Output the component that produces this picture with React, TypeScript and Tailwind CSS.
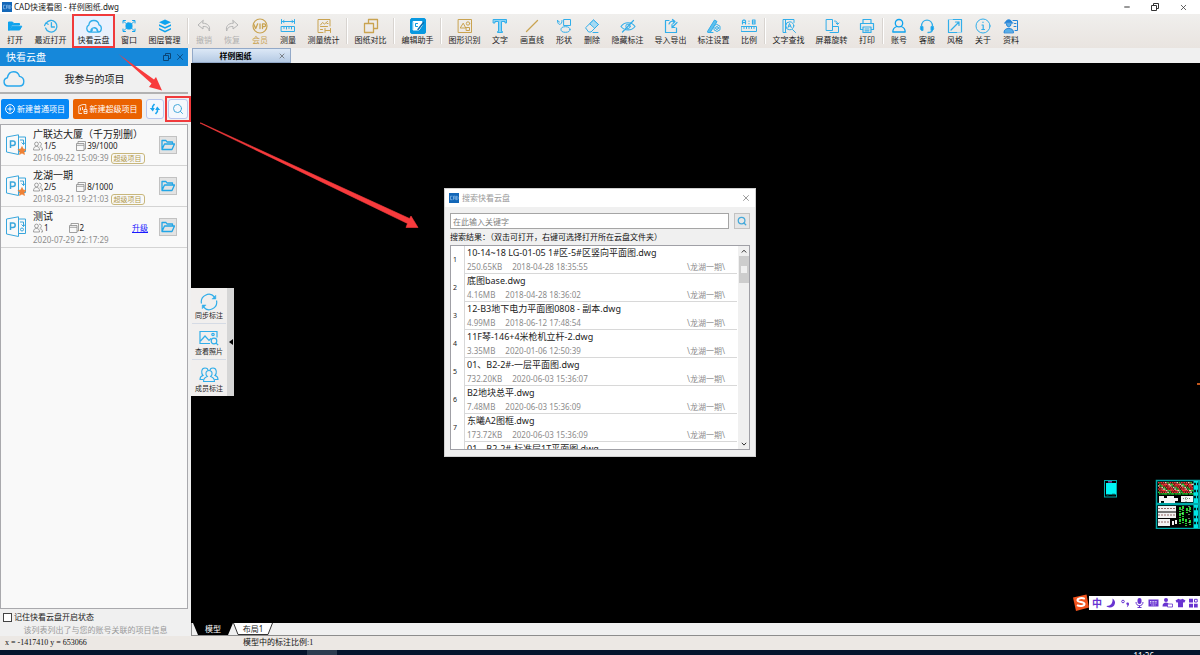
import { useState, type ReactNode } from "react";
import { clsx } from "clsx";
import { Minus, Search, X } from "lucide-react";

const CYAN = "#31aeea";
const SKY = "#0fa3ee";
const GOLD = "#c9a350";
const GREY = "#b4b4b4";

function Icon({ color = CYAN, children }: { color?: string; children: ReactNode }) {
  return (
    <svg
      viewBox="0 0 16 16"
      className="h-4 w-4"
      fill="none"
      stroke={color}
      strokeWidth="1"
      strokeLinecap="round"
      strokeLinejoin="round"
      aria-hidden="true"
    >
      {children}
    </svg>
  );
}

const icons: Record<string, ReactNode> = {
  open: (
    <Icon color={SKY}>
      <path d="M1.5 12V4h4l1.3 1.5h5.7V7H4.5L2.5 12z" fill={SKY} />
      <path d="M4.8 8.2h10L12.6 12H2.8z" fill={SKY} />
    </Icon>
  ),
  recent: (
    <Icon>
      <path d="M3.2 5.2A5.8 5.8 0 1 1 2.6 10M1.6 7.6l1.2-2.6 2.4 1.3M8.4 4.6V9h3" strokeWidth="1.3" />
    </Icon>
  ),
  cloud: (
    <Icon>
      <path
        d="M4 14A3.6 3.6 0 0 1 2.8 7.200C3.500 1 12 1 13 6.800 16.500 8 15.800 14 12.500 14M5 14.200c-1-5 5.500-6.200 6.800-1.200M6.400 11.800L4.800 14.200h7.400l-1.400-2.200"
        strokeWidth="1.3"
      />
    </Icon>
  ),
  window: (
    <Icon color={SKY}>
      <path d="M2 5V2.500h2.500M11.500 2.500H14V5M14 11v2.500h-2.500M4.500 13.500H2V11M3 3.500l2 2M13 3.500l-2 2M13 12.500l-2-2M3 12.500l2-2" />
      <rect x="5" y="5" width="6" height="6" rx="2" fill={SKY} />
    </Icon>
  ),
  layers: (
    <Icon color="none">
      <path d="M8 1.500l6 2.800-6 2.800-6-2.800z" fill={SKY} />
      <path d="M2 6.200l6 2.800 6-2.800v1.700l-6 2.800-6-2.800zM2 9.900l6 2.800 6-2.800v1.700l-6 2.800-6-2.800z" fill={SKY} />
    </Icon>
  ),
  undo: (
    <Icon color={GREY}>
      <path d="M7 2.500L2 7l5 4V8.500c3.500-.3 5.500 1 6.300 4.500C14.500 8.500 12 5.300 7 5.200z" />
    </Icon>
  ),
  redo: (
    <Icon color={GREY}>
      <path d="M9 2.500L14 7l-5 4V8.500c-3.500-.3-5.500 1-6.300 4.500C1.500 8.500 4 5.300 9 5.200z" />
    </Icon>
  ),
  vip: (
    <Icon color={GOLD}>
      <circle cx="8" cy="8" r="7" strokeWidth="1.200" />
      <path d="M1.500 5.800l2.200 4.700 2-4.700M8 5.800v4.700M10.500 10.500V5.900h1.800a1.300 1.300 0 0 1 0 2.700h-1.800" strokeWidth="1.300" />
    </Icon>
  ),
  measure: (
    <Icon>
      <path d="M1.500 1.500v4M14.500 1.500v4M2 3.500h12M4 2.500l-1.500 1L4 4.500M12 2.500l1.500 1-1.500 1" />
      <path d="M1.500 8.500h13v5h-13zM4 8.500v2M6.500 8.500v2.500M9 8.500v2M11.500 8.500v2.500" />
    </Icon>
  ),
  stats: (
    <Icon color={GOLD}>
      <path d="M7 14.500H2v-13h12V8M4.500 7L6.500 4.500l2 1.500 3-2.500M4.500 8.500h7M11 5.500h1M9 10.500v4M14.500 10.500v4M9.500 12.500h5M4.500 11.500h2" />
    </Icon>
  ),
  compare: (
    <Icon color={GOLD}>
      <path d="M5.500 5.500v-4h9v9h-4M1.500 5.500h9v9h-9z" strokeWidth="1.300" />
    </Icon>
  ),
  helper: (
    <Icon color="#ffffff">
      <rect x=".5" y=".5" width="15" height="15" rx="1.500" fill="#0898e0" stroke="#0898e0" />
      <path d="M3.500 3.500h8.500v4l-3 4.500H3.500z" fill="#ffffff" />
      <path d="M7.500 5.500h-2v3h2" stroke="#0898e0" />
      <path d="M13.500 4.500l-5.500 7" stroke="#0b6fb0" strokeWidth="1.500" />
    </Icon>
  ),
  shapesScan: (
    <Icon color={GOLD}>
      <path d="M1.500 1.500h13v13h-13zM6 5.500L3.200 10h5.200z" />
      <circle cx="11" cy="5.500" r="1.700" />
      <path d="M9.500 9.500h3v3h-3z" />
    </Icon>
  ),
  text: (
    <Icon>
      <path d="M1.500 1.500h13v3.500h-1.500V3.500H9.500v10h1v1h-5v-1h1v-10H3V5H1.500z" fill="#8ad3f5" />
    </Icon>
  ),
  line: (
    <Icon color={GOLD}>
      <path d="M2.500 13.500l11-11" strokeWidth="1.300" />
    </Icon>
  ),
  shape: (
    <Icon>
      <path d="M8 1.500h6.500v6H8zM1.500 2.500c0 6 5 4.500 4.500 0M1.500 2.500l2 1.500" />
      <ellipse cx="9.500" cy="11.500" rx="4.500" ry="2.800" />
    </Icon>
  ),
  eraser: (
    <Icon>
      <path d="M1.800 9.500L9.500 2l5 4.500-7.500 7.500H5z" />
      <path d="M6 5.500L9.500 2l5 4.500L11 10z" fill="#a5daf3" />
      <path d="M9 14.500h5" />
    </Icon>
  ),
  hide: (
    <Icon>
      <path d="M1 8.500c3.500-5 10.500-5 14 0-3.500 4.600-10.500 4.600-14 0zM2.500 14L13.500 2.500" strokeWidth="1.200" />
      <circle cx="8" cy="8.300" r="2.200" />
    </Icon>
  ),
  transfer: (
    <Icon>
      <path d="M6 2.500H2.500v12h11V10M6 6c1-2.500 3-3.500 5-2.500M9.500 1.500l2.500 2-2 2M14 4.500l-5 5M9 6.500v3h3" strokeWidth="1.200" />
    </Icon>
  ),
  annotate: (
    <Icon>
      <path d="M1.500 13.500L8.500 2l2.500 1.500L4.500 14z" fill="#5ec0ee" />
      <path d="M2 14.500h5" />
      <path d="M11 6.500l3 1.700v3.600l-3 1.700-3-1.700V8.200z" fill="#eeeceb" />
      <circle cx="11" cy="10" r="1.400" />
    </Icon>
  ),
  ratio: (
    <Icon>
      <path d="M1.500 6V3l1-1h1l1 1v3M1.500 4.500h3M11.500 2v4h2.500v-4zM11.500 4H14M8 3v.2M8 5.500v.2" strokeWidth="1.200" />
      <path d="M.5 8.500h15v5H.5zM3 8.500v2M5.500 8.500v2M8 8.500v2M10.500 8.500v2M13 8.500v2" />
    </Icon>
  ),
  findText: (
    <Icon>
      <path d="M5 14.500H2v-13h11v3M4.500 1.500v13M11.500 11.500l3 3M7 9.500l1.500-4 1.800 4M7.500 8.200h2" />
      <circle cx="8.800" cy="7.800" r="4" />
    </Icon>
  ),
  rotate: (
    <Icon>
      <path d="M2.500 1.500h6v11h-6zM8.500 8.500h6v6H6M10.500 3c2 0 3 1 3 3M12 5l1.500 1.500L15 5" />
    </Icon>
  ),
  print: (
    <Icon>
      <path d="M4 5.500v-4h8v4M4 11.500H1.500v-6h13v6H12M4 9h8v5.500H4zM6 11h4M6 12.800h4" strokeWidth="1.200" />
    </Icon>
  ),
  account: (
    <Icon color={SKY}>
      <circle cx="8" cy="5.200" r="3.700" strokeWidth="1.300" />
      <path d="M5.800 8.500c-3 1-4 3-4 5.500h12.400c0-2.500-1-4.500-4-5.500" strokeWidth="1.300" />
    </Icon>
  ),
  service: (
    <Icon>
      <path d="M2.500 8.500c0-8.500 11-8.500 11 0M13.500 12c-.5 2-2.500 2.500-4.500 2.500" strokeWidth="1.300" />
      <path d="M2 8.500h2v4H2.500C1 11.500 1 9.500 2 8.500zM14 8.500h-2v4h1.500c1.500-1 1.500-3 .5-4z" fill={SKY} />
    </Icon>
  ),
  style: (
    <Icon>
      <path d="M1.500 1.500h13v13h-13zM4 12l8-8M8.500 4H12v3.500" strokeWidth="1.200" />
      <path d="M1.500 1.500h4M10.500 14.500h4" stroke="#9bd6f3" />
    </Icon>
  ),
  about: (
    <Icon>
      <circle cx="8" cy="8" r="7" />
      <path d="M8 4.200v.3M7 7h1.200v4.500M6.800 11.500h2.700" strokeWidth="1.200" />
    </Icon>
  ),
  material: (
    <Icon color="#2484d8">
      <path d="M2.500 4.500C3 .8 8.500.8 9 4.500z" fill="#2484d8" />
      <path d="M1.500 5h8.500M3.500 6c0 4 4.500 4 4.500 0M1 14.500c0-3 2-4 4.800-4s4.700 1 4.700 4z" fill="#58aee8" />
      <path d="M10 2.500h4.500v10H12M11.500 5.500h1.500M11 8.500h2" />
    </Icon>
  ),
};

type Tool = { icon: string; label: string; tone?: "gold" | "grey"; active?: boolean };

const toolGroups: Tool[][] = [
  [
    { icon: "open", label: "打开" },
    { icon: "recent", label: "最近打开" },
    { icon: "cloud", label: "快看云盘", active: true },
    { icon: "window", label: "窗口" },
    { icon: "layers", label: "图层管理" },
  ],
  [
    { icon: "undo", label: "撤销", tone: "grey" },
    { icon: "redo", label: "恢复", tone: "grey" },
    { icon: "vip", label: "会员", tone: "gold" },
    { icon: "measure", label: "测量" },
    { icon: "stats", label: "测量统计" },
  ],
  [{ icon: "compare", label: "图纸对比" }],
  [{ icon: "helper", label: "编辑助手" }],
  [
    { icon: "shapesScan", label: "图形识别" },
    { icon: "text", label: "文字" },
    { icon: "line", label: "画直线" },
    { icon: "shape", label: "形状" },
    { icon: "eraser", label: "删除" },
    { icon: "hide", label: "隐藏标注" },
    { icon: "transfer", label: "导入导出" },
    { icon: "annotate", label: "标注设置" },
    { icon: "ratio", label: "比例" },
  ],
  [
    { icon: "findText", label: "文字查找" },
    { icon: "rotate", label: "屏幕旋转" },
    { icon: "print", label: "打印" },
  ],
  [
    { icon: "account", label: "账号" },
    { icon: "service", label: "客服" },
    { icon: "style", label: "风格" },
    { icon: "about", label: "关于" },
    { icon: "material", label: "资料" },
  ],
];

function AppBadge() {
  return (
    <svg viewBox="0 0 10 10" className="h-[10px] w-[10px] shrink-0" aria-hidden="true">
      <rect width="10" height="10" fill="#1367b8" />
      <path d="M3.500 3.200H1.500v3.500h2M4.500 6.800V3.200h1.800v3.600M4.500 5h1.800M7.500 3.200v3.600c2 0 2-3.600 0-3.600" fill="none" stroke="#8fc0ec" strokeWidth=".7" />
    </svg>
  );
}

function RestoreGlyph() {
  return (
    <svg viewBox="0 0 8 8" className="h-2 w-2" fill="none" stroke="currentColor" aria-hidden="true">
      <path d="M.5 2.500h5v5h-5zM2.500 2.500v-2h5v5h-2" />
    </svg>
  );
}

function TitleBar() {
  return (
    <header className="flex h-[14px] shrink-0 items-center bg-white pl-[2px] pr-3">
      <AppBadge />
      <h1 className="ml-[2px] flex-1 text-[8px] leading-[14px] text-[#222]">CAD快速看图 - 样例图纸.dwg</h1>
      <div className="flex items-center gap-5 text-[#333]">
        <button type="button" aria-label="最小化"><Minus className="h-2 w-2" strokeWidth={3} /></button>
        <button type="button" aria-label="还原"><RestoreGlyph /></button>
        <button type="button" aria-label="关闭"><X className="h-[9px] w-[9px]" /></button>
      </div>
    </header>
  );
}

function ToolButton({ icon, label, tone, active }: Tool) {
  return (
    <button
      type="button"
      className={clsx(
        "relative flex h-[34px] flex-col items-center pt-1 text-[8px] leading-[11px]",
        label.length === 2 ? "w-7" : label.length === 3 ? "w-9" : "w-[43px]",
        tone === "gold" ? "text-[#c9a350]" : tone === "grey" ? "text-[#b0b0b0]" : "text-[#222]",
        active && "bg-[#e9f1fd]"
      )}
    >
      {icons[icon]}
      <span className="whitespace-nowrap">{label}</span>
      {active && <span className="absolute inset-0 border-2 border-[#f03a3c]" />}
    </button>
  );
}

function Toolbar() {
  return (
    <nav className="flex h-[34px] shrink-0 overflow-hidden bg-gradient-to-b from-[#f0efed] to-[#e9e4e0] pl-px">
      {toolGroups.map((group, i) => (
        <div key={i} className="flex shrink-0">
          {i > 0 && <span className="mx-px my-1 w-[2px] border-r border-white bg-[#d8d4d0]" />}
          {group.map((tool) => (
            <ToolButton key={tool.label} {...tool} />
          ))}
        </div>
      ))}
    </nav>
  );
}

type Project = { name: string; members: string; drawings: string; date: string; premium: boolean };

const projects: Project[] = [
  { name: "广联达大厦（千万别删）", members: "1/5", drawings: "39/1000", date: "2016-09-22 15:09:39", premium: true },
  { name: "龙湖一期", members: "2/5", drawings: "8/1000", date: "2018-03-21 19:21:03", premium: true },
  { name: "测试", members: "1", drawings: "2", date: "2020-07-29 22:17:29", premium: false },
];

function ProjectIcon({ starred }: { starred: boolean }) {
  return (
    <svg viewBox="0 0 20 22" className="mt-[9px] h-[22px] w-5 shrink-0" fill="none" stroke="#39a6dc" aria-hidden="true">
      <path d="M.5 3L12.500.8v19.700L.5 18zM12.500 3h7v14.500h-7" />
      <path d="M4.500 14V7H7a2.200 2.200 0 0 1 0 4.400H4.500" strokeWidth="1.500" />
      <path d="M14 6h3.500v4.500M15.500 8.500l2 2 1.500-2" />
      {starred ? (
        <path d="M16 12.500l1.300 2.600 2.700.4-2 2 .5 3-2.500-1.400-2.500 1.400.5-3-2-2 2.700-.4z" fill="#ee8136" stroke="#ee8136" strokeWidth=".6" />
      ) : (
        <circle cx="16" cy="13.500" r="1.500" />
      )}
    </svg>
  );
}

function PeopleGlyph() {
  return (
    <svg viewBox="0 0 10 10" className="h-[10px] w-[10px]" fill="none" stroke="#8a8a8a" strokeWidth=".8" aria-hidden="true">
      <circle cx="3.500" cy="3" r="1.900" />
      <path d="M.5 9c0-2.500 1-3.500 3-3.500s3 1 3 3.500zM6 1.200c3-.3 3 3.500.7 4M7.200 5.800C9 6 9.500 7 9.500 9H8" />
    </svg>
  );
}

function DrawingsGlyph() {
  return (
    <svg viewBox="0 0 10 10" className="h-[10px] w-[10px]" fill="none" stroke="#8a8a8a" strokeWidth=".8" aria-hidden="true">
      <path d="M.5 2.500h7.500v7H.5zM.5 4.300H8M2 2.500v-2h7.500V8H8" />
    </svg>
  );
}

function ProjectRow({ project }: { project: Project }) {
  return (
    <li className="flex h-[41px] border-b border-[#d4d4d4] pl-[5px] pr-[10px]">
      <ProjectIcon starred={project.premium} />
      <div className="ml-[7px] min-w-0 flex-1 whitespace-nowrap pt-[3px]">
        <h3 className="text-[10px] leading-3 text-[#222]">{project.name}</h3>
        <div className="flex items-center text-[8px] leading-3 text-[#222]">
          <PeopleGlyph />
          <span className="ml-px mr-5">{project.members}</span>
          <DrawingsGlyph />
          <span className="ml-px">{project.drawings}</span>
          {!project.premium && (
            <a href="#upgrade" className="ml-auto mr-[11px] text-[#1a1aff] underline">升级</a>
          )}
        </div>
        <div className="flex items-center gap-[2px] text-[8px] leading-3 text-[#8c8c8c]">
          <time>{project.date}</time>
          {project.premium && (
            <span className="rounded-[3px] border border-[#c8b77c] px-[2px] text-[7px] leading-[9px] text-[#b39b50]">超级项目</span>
          )}
        </div>
      </div>
      <button
        type="button"
        aria-label={`打开${project.name}`}
        className="mt-[11px] flex h-[18px] w-[18px] shrink-0 items-center justify-center border border-[#c2c2c2] bg-[#e3e3e3]"
      >
        <svg viewBox="0 0 14 12" className="h-3 w-[14px]" fill="none" stroke="#22a6e6" strokeWidth="1.300" strokeLinejoin="round" aria-hidden="true">
          <path d="M1 10.500v-9h4l1 1.500h5.500v2M1 10.500L3.500 5h10L11 10.500z" />
        </svg>
      </button>
    </li>
  );
}

function Sidebar() {
  const [remember, setRemember] = useState(false);

  return (
    <aside className="flex w-[188px] shrink-0 flex-col bg-[#f0f0f0]">
      <div className="flex h-[18px] shrink-0 items-center bg-[#1688da] pl-[6px] pr-[3px]">
        <h2 className="flex-1 text-[10px] leading-[18px] text-white">快看云盘</h2>
        <div className="flex items-center gap-1 text-[#0b4677]">
          <button type="button" aria-label="浮动"><RestoreGlyph /></button>
          <button type="button" aria-label="关闭面板"><X className="h-[10px] w-[10px]" /></button>
        </div>
      </div>

      <div className="flex h-7 shrink-0 items-center border-b-2 border-[#b2b2b2] pl-[3px]">
        <svg viewBox="0 0 22 16" className="h-4 w-[22px]" fill="none" stroke="#27a7ec" strokeWidth="1.400" aria-hidden="true">
          <path d="M5 15a4.200 4.200 0 0 1-.6-8.300C5.500 1.500 8 .8 10.500.8c3.500 0 5.300 2 6 4.600C19 6 20.800 7.500 20.800 10.200 20.800 13 19 15 16.500 15z" />
        </svg>
        <h3 className="flex-1 pr-6 text-center text-[10px] leading-4 text-[#222]">我参与的项目</h3>
      </div>

      <div className="flex h-[30px] shrink-0 items-center px-px text-[8px] text-white">
        <button type="button" className="flex h-5 w-[68px] shrink-0 items-center justify-center gap-[2px] whitespace-nowrap rounded-[2px] bg-[#0788f5]">
          <svg viewBox="0 0 10 10" className="h-[10px] w-[10px]" fill="none" stroke="white" aria-hidden="true">
            <circle cx="5" cy="5" r="4.400" />
            <path d="M5 2.500v5M2.500 5h5" />
          </svg>
          新建普通项目
        </button>
        <button type="button" className="ml-1 flex h-5 w-[69px] shrink-0 items-center justify-center gap-[2px] whitespace-nowrap rounded-[2px] bg-[#ea6200]">
          <svg viewBox="0 0 10 10" className="h-[10px] w-[10px]" fill="none" stroke="white" strokeWidth=".8" aria-hidden="true">
            <path d="M4 9.500H.8V2l4-1.500h3V5M2.500 3.500v3M4.500 3v3M6 5.500h3v4H6zM6 7.500h3" />
          </svg>
          新建超级项目
        </button>
        <button type="button" aria-label="刷新" className="ml-1 flex h-5 w-[18px] shrink-0 items-center justify-center rounded-[3px] border border-[#b9c6ee] bg-[#f4f8fd]">
          <svg viewBox="0 0 12 12" className="h-3 w-3" fill="none" stroke="#18a5ef" strokeWidth="1.500" aria-hidden="true">
            <path d="M5.500 1L3.600 3.500V6.500M8.400 5.500V8.500L6.500 11" />
            <path d="M.8 5h5L3.800 8.500zM6.200 7L8.200 3.500 11.200 7z" fill="#18a5ef" stroke="none" />
          </svg>
        </button>
        <button type="button" aria-label="搜索" className="relative ml-1 flex h-5 w-5 shrink-0 items-center justify-center rounded-[3px] border border-[#b9c6ee] bg-[#f4f8fd]">
          <Search className="h-3 w-3 text-[#45a9da]" strokeWidth={2} />
          <span className="absolute -inset-1 border-2 border-[#f03a3c]" />
        </button>
      </div>

      <ul className="min-h-0 flex-1 overflow-hidden border border-[#a9a9ad] bg-[#f9f9f9]">
        {projects.map((project) => (
          <ProjectRow key={project.name} project={project} />
        ))}
      </ul>

      <div className="shrink-0 pb-px pl-[3px] pt-px text-[8px]">
        <label className="flex items-center gap-[2px] leading-[14px] text-[#222]">
          <input
            type="checkbox"
            checked={remember}
            onChange={(e) => setRemember(e.target.checked)}
            className="h-[9px] w-[9px] appearance-none border border-[#444] bg-white checked:bg-[#1688da]"
          />
          记住快看云盘开启状态
        </label>
        <p className="text-center leading-[11px] text-[#999]">该列表列出了与您的账号关联的项目信息</p>
      </div>
    </aside>
  );
}

function SideTools() {
  return (
    <div className="absolute left-0 top-[225px] flex bg-[#d6d6d6]">
      <div className="flex w-9 flex-col divide-y divide-[#d5dbe5] bg-[#f1efee] px-px text-[7px] leading-[10px] text-[#222]">
        <button type="button" className="flex h-9 flex-col items-center justify-end pb-[2px]">
          <svg viewBox="0 0 20 18" className="h-[18px] w-5" fill="none" stroke={CYAN} strokeWidth="1.200" aria-hidden="true">
            <path d="M2.500 10.500A7.500 7.500 0 0 1 15.500 4M17.500 7.500A7.500 7.500 0 0 1 4.500 14" />
            <path d="M16.800 2v4h-4M3.200 16v-4h4" fill={CYAN} strokeWidth=".5" />
          </svg>
          <span className="whitespace-nowrap">同步标注</span>
        </button>
        <button type="button" className="flex h-9 flex-col items-center justify-end pb-[2px]">
          <svg viewBox="0 0 20 18" className="h-[18px] w-5" fill="none" stroke={CYAN} strokeWidth="1.200" aria-hidden="true">
            <path d="M11 14.500H1v-12h17v6M1.500 12l4.500-5 4 4.500 2-2" />
            <circle cx="14" cy="5.500" r="1.200" />
            <circle cx="15" cy="12" r="2.800" />
            <path d="M17 14l2.200 2.200" />
          </svg>
          <span className="whitespace-nowrap">查看照片</span>
        </button>
        <button type="button" className="flex h-9 flex-col items-center justify-end pb-[2px]">
          <svg viewBox="0 0 20 18" className="h-[18px] w-5" fill="none" stroke={CYAN} strokeWidth="1.100" aria-hidden="true">
            <path d="M4.500 13.500H1c0-2.500 1-3.500 3-4-2-2-2-7.500 2-7.500 1.700 0 3 1 3 2.500M15.500 13.500H19c0-2.500-1-3.500-3-4 2-2 2-7.500-2-7.500-1.700 0-3 1-3 2.500" />
            <path d="M8.300 10.500C6 8.500 6.500 4.500 10 4.500s4 4 1.700 6c2.300.8 3.800 1.500 3.800 5h-11c0-3.500 1.500-4.200 3.800-5z" />
          </svg>
          <span className="whitespace-nowrap">成员标注</span>
        </button>
      </div>
      <button type="button" aria-label="收起" className="flex w-[7px] items-center justify-center">
        <svg viewBox="0 0 4 6" className="h-[6px] w-1" aria-hidden="true"><path d="M4 0v6L0 3z" /></svg>
      </button>
    </div>
  );
}

// Thumbnails of the sheets that are laid out on the model canvas
function SheetPreview() {
  const colors = ["#e33", "#e8d8b0", "#e33", "#3c3", "#f44"];
  return (
    <svg viewBox="0 0 96 50" className="absolute right-0 top-[416px] h-[50px] w-24" aria-hidden="true">
      <rect x=".5" y="1.500" width="12" height="16.500" fill="none" stroke="#0aa" />
      <rect x="2" y="4" width="10" height="11.500" fill="#00f5f5" />
      <path d="M4 2.800h4" stroke="#7d4fb5" strokeWidth="1.500" />
      <path d="M2.500 16h2M8 15.500h3" stroke="#055" strokeWidth="1.500" />
      <rect x="52.500" y="1.500" width="43" height="23" fill="none" stroke="#0aa" strokeWidth="1.500" />
      <rect x="52.500" y="25.500" width="43" height="24" fill="none" stroke="#0aa" strokeWidth="1.500" />
      {Array.from({ length: 8 }, (_, r) =>
        Array.from({ length: 15 }, (_, c) => (
          <rect key={`${r}-${c}`} x={54 + c * 2.3 + (r % 2)} y={3 + r * 1.6} width={1.7 + ((r * c) % 3) / 2} height="1.4" fill={r > 6 ? "#2c3" : colors[(r * 3 + c * 7) % 5]} />
        ))
      )}
      <path d="M55 17h5v2h3v-2h7v2h4v3h-3v2H60v-2h-3v2h-2zM77 17h12v6H77z" fill="#f5f5f5" />
      <path d="M79 19.500h8M82 18v5" stroke="#575" strokeWidth=".8" strokeDasharray="1 1" />
      <path d="M54 27h18v5.500H54zM54 33.500h18V39H54zM54 40h12v7H54zM68 42h2v4h-2zM71 41h2v4h-2z" fill="#f2f2f2" />
      <path d="M54 29.500h18M54 36h18M54 43h12" stroke="#744" strokeWidth=".8" strokeDasharray="2 1" />
      <path d="M76 28v18M79 27v17M83 29v5M86 28v6M82 40v7M86 41v5" stroke="#27d632" strokeWidth="2" strokeDasharray="3 1 1 1" />
      <path d="M78 30v8M85 27v18" stroke="#ddd" strokeDasharray="1 3" />
      <path d="M92 2v22M92 26v23" stroke="#00e5e5" strokeWidth="5" />
      <path d="M90 5h4M90 12h4M90 18h4M90 30h4M90 38h4M90 44h4" stroke="#022" strokeWidth="2.500" strokeDasharray="2 1" />
    </svg>
  );
}

function ImeBar() {
  return (
    <div className="absolute bottom-[12px] right-0 flex h-[17px] items-center text-[#6833d1]">
      <svg viewBox="0 0 18 18" className="z-10 -mr-px h-[18px] w-[18px]" aria-hidden="true">
        <path d="M1 3.500L14.500.5l2.500 13L4 17z" fill="#f2531d" />
        <path d="M12.800 4.800c-3-1.300-7.300-.6-7.300 1.400 0 2.300 7 1.500 7 3.800 0 2.200-4.800 2.700-7.500 1.200" fill="none" stroke="white" strokeWidth="2" />
      </svg>
      <div className="flex h-[14px] items-center gap-1 bg-white pl-[3px] pr-[2px]">
        <span className="text-[10px] font-bold leading-[14px]">中</span>
        <svg viewBox="0 0 92 10" className="h-[10px] w-[92px]" fill="currentColor" aria-hidden="true">
          <path d="M6.500.5c5 3 2 9.500-3 9C2 9.400 1 9 .5 8 5 8 7 5 6.500.5z" />
          <circle cx="17" cy="3.500" r="1.300" fill="none" stroke="currentColor" />
          <path d="M21 4.500c2.500-.5 3 2.500-.2 4.700l.7-2.200c-1.500-.3-1.500-2.200-.5-2.500z" />
          <rect x="31.500" y="0" width="4" height="6" rx="2" />
          <path d="M30 4c0 5 7 5 7 0M33.500 7.500v2M31.500 9.500h4" fill="none" stroke="currentColor" />
          <path d="M42.500 1.500h10v7h-10z" />
          <path d="M44 3.500h7M44 5h7M45.500 7h4" stroke="white" strokeWidth=".8" strokeDasharray="1 .6" />
          <circle cx="60" cy="2" r="2" />
          <path d="M56.500 8.500c0-3 1.500-4 3.500-4s3 1 3 4z" />
          <path d="M61.500 6h5v3h-5z" fill="white" stroke="currentColor" strokeWidth=".8" />
          <path d="M72.500.8c1 1 3 1 4 0l3 1.700-1.300 2.300-1.200-.5v5h-5v-5l-1.200.5-1.300-2.300z" />
          <path d="M83 .8h4v3.700h-4zM83 5.800h4v3.700h-4zM88 5.800h3.700v3.700H88z" />
          <path d="M88.500 1.300h2.700v2.700h-2.700z" fill="none" stroke="currentColor" />
        </svg>
      </div>
    </div>
  );
}

function Workspace() {
  return (
    <main className="ml-[3px] flex min-w-0 flex-1 flex-col bg-[#f0f0f0]">
      <div className="flex h-[15px] shrink-0 pl-px">
        <div className="flex w-[99px] items-center border border-[#93a9c8] bg-gradient-to-b from-[#dce8f6] to-[#b5cae4] pr-1 text-[8px] leading-[13px]">
          <span className="flex-1 text-center font-bold text-black">样例图纸</span>
          <button type="button" aria-label="关闭图纸"><X className="h-2 w-2 text-[#555]" /></button>
        </div>
      </div>

      <section className="relative min-h-0 flex-1 overflow-hidden bg-black" aria-label="模型空间">
        <SideTools />
        <SheetPreview />
        <span className="absolute right-0 top-[320px] h-[2px] w-[3px] bg-[#c0561c]" />
        <ImeBar />
      </section>

      <div className="flex h-[13px] shrink-0 border-b border-l border-[#8d8d8d] pl-px text-[8px] leading-3">
        <button type="button" className="relative w-10 text-white">
          <svg viewBox="0 0 40 12" className="absolute inset-0 h-3 w-10" aria-hidden="true">
            <path d="M0 0h40l-5 12H5z" />
          </svg>
          <span className="relative">模型</span>
        </button>
        <button type="button" className="relative w-10 text-[#222]">
          <svg viewBox="0 0 40 12" className="absolute inset-0 h-3 w-10" fill="white" stroke="#333" aria-hidden="true">
            <path d="M.5 0L5 11.500h30L39.500 0" />
          </svg>
          <span className="relative">布局1</span>
        </button>
      </div>
    </main>
  );
}

const results = [
  { name: "10-14~18 LG-01-05 1#区-5#区竖向平面图.dwg", size: "250.65KB", date: "2018-04-28 18:35:55" },
  { name: "底图base.dwg", size: "4.16MB", date: "2018-04-28 18:36:02" },
  { name: "12-B3地下电力平面图0808 - 副本.dwg", size: "4.99MB", date: "2018-06-12 17:48:54" },
  { name: "11F琴-146+4米枪机立杆-2.dwg", size: "3.35MB", date: "2020-01-06 12:50:39" },
  { name: "01、B2-2#-一层平面图.dwg", size: "732.20KB", date: "2020-06-03 15:36:07" },
  { name: "B2地块总平.dwg", size: "7.48MB", date: "2020-06-03 15:36:09" },
  { name: "东曦A2图框.dwg", size: "173.72KB", date: "2020-06-03 15:36:09" },
  { name: "01、B2-2#-标准层1T平面图.dwg", size: "", date: "" },
];

function SearchDialog() {
  const [keyword, setKeyword] = useState("");

  return (
    <div
      role="dialog"
      aria-label="搜索快看云盘"
      className="absolute left-1/2 top-[188px] w-[312px] -translate-x-1/2 border border-[#d0d0d0] bg-[#f0f0f0] text-[8px]"
    >
      <div className="flex h-[18px] items-center bg-white pl-1 pr-1">
        <AppBadge />
        <h2 className="ml-[3px] flex-1 text-[#999]">搜索快看云盘</h2>
        <button type="button" aria-label="关闭"><X className="h-[10px] w-[10px] text-[#888]" /></button>
      </div>

      <div className="px-[5px] pb-[6px] pt-[6px]">
        <div className="flex items-center gap-[5px]">
          <input
            type="text"
            aria-label="关键字"
            placeholder="在此输入关键字"
            value={keyword}
            onChange={(e) => setKeyword(e.target.value)}
            className="h-4 min-w-0 flex-1 border border-[#a5a5a5] bg-white px-[2px] leading-3 outline-none placeholder:text-[#808080]"
          />
          <button type="button" aria-label="搜索" className="flex h-4 w-4 items-center justify-center border border-[#c2c2c2] bg-[#e6e6e6]">
            <Search className="h-[10px] w-[10px] text-[#45a9da]" strokeWidth={3} />
          </button>
        </div>
        <p className="whitespace-nowrap leading-4 text-[#111]">搜索结果：（双击可打开，右键可选择打开所在云盘文件夹）</p>

        <div className="flex h-[205px] overflow-hidden border border-[#a0a0a6] bg-white">
          <ol className="min-w-0 flex-1">
            {results.map((item, i) => (
              <li key={item.name} className="flex h-7">
                <span className="w-[14px] shrink-0 border-r border-[#d8d8d8] pl-[2px] text-[7px] leading-7 text-[#222]">{i < 7 ? i + 1 : ""}</span>
                <div className="min-w-0 flex-1 whitespace-nowrap border-b border-[#d8d8d8] pl-[2px]">
                  <p className="text-[9px] leading-[14px] text-[#222]">{item.name}</p>
                  <div className="flex leading-[13px] text-[#8c8c8c]">
                    <span className="mr-[10px]">{item.size}</span>
                    <time className="flex-1">{item.date}</time>
                    <span className="pr-3">{item.size && "\\龙湖一期\\"}</span>
                  </div>
                </div>
              </li>
            ))}
          </ol>
          <div className="ml-px flex w-[11px] flex-col items-center justify-between bg-[#f0f0f0]" aria-hidden="true">
            <div className="flex w-full flex-col items-center">
              <svg viewBox="0 0 6 10" className="h-[10px] w-[6px]" fill="none" stroke="#333"><path d="M.8 6.500L3 4.200l2.200 2.300" /></svg>
              <div className="flex h-[27px] w-[10px] items-center justify-center bg-[#cdcdcd]">
                <span className="h-[7px] w-[6px] bg-[#f0f0f0]" />
              </div>
            </div>
            <svg viewBox="0 0 6 10" className="h-[10px] w-[6px]" fill="none" stroke="#333"><path d="M.8 3.800L3 6.100l2.200-2.300" /></svg>
          </div>
        </div>
      </div>
    </div>
  );
}

function PointerArrows() {
  return (
    <svg viewBox="0 0 420 230" className="pointer-events-none absolute left-0 top-0 h-[230px] w-[420px]" fill="#f83b3d" aria-hidden="true">
      <path d="M118.500 54L154 79.500 156 77 162 90.500 149 87 151.500 83.500z" />
      <path d="M200 123L201 123 409.500 218.500 411 216 418 227.500 406 227.500 407.500 223.500z" stroke="#f83b3d" strokeWidth=".6" />
    </svg>
  );
}

export default function App() {
  return (
    <div className="relative flex h-screen flex-col overflow-hidden bg-[#f0f0f0] font-['Noto_Sans','Noto_Sans_CJK_SC',sans-serif]">
      <TitleBar />
      <Toolbar />
      <div className="flex min-h-0 flex-1">
        <Sidebar />
        <Workspace />
      </div>
      <footer className="flex h-[14px] shrink-0 items-center bg-[#ece8e4] pl-[5px] font-['Liberation_Serif','Noto_Sans_CJK_SC',serif] text-[8px] text-[#111]">
        <span className="w-[238px]">x = -1417410 y = 653066</span>
        <span>模型中的标注比例:1</span>
      </footer>
      <div className="flex h-[5px] shrink-0 overflow-hidden bg-[#04142c] pr-[46px] text-[8px] leading-[10px] text-white">
        <span className="ml-[307px] w-[30px] bg-[#2c3c50]" />
        <time className="ml-auto pt-px">11:26</time>
      </div>
      <SearchDialog />
      <PointerArrows />
    </div>
  );
}
